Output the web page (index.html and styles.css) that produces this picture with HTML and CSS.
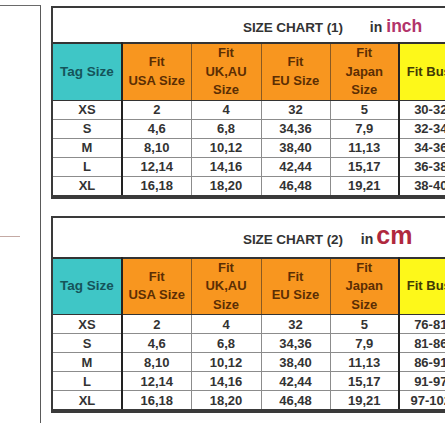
FILE: index.html
```html
<!DOCTYPE html>
<html>
<head>
<meta charset="utf-8">
<link rel="stylesheet" href="styles.css">
</head>
<body>
<div class="side"><div class="mark"></div></div>
<div class="charts">
  <div class="chart">
    <div class="title t1"><span class="name">SIZE CHART (1)</span><span class="in">in</span><span class="unit inch">inch</span></div>
    <table>
      <colgroup><col class="c1"><col class="c2"><col class="c3"><col class="c4"><col class="c5"><col class="c6"></colgroup>
      <tr class="head">
        <th class="tag">Tag Size</th>
        <th class="org">Fit<br>USA Size</th>
        <th class="org">Fit<br>UK,AU<br>Size</th>
        <th class="org">Fit<br>EU Size</th>
        <th class="org dk">Fit<br>Japan<br>Size</th>
        <th class="yel">Fit Bust</th>
      </tr>
      <tr><td>XS</td><td>2</td><td>4</td><td>32</td><td class="dk">5</td><td>30-32</td></tr>
      <tr><td>S</td><td>4,6</td><td>6,8</td><td>34,36</td><td class="dk">7,9</td><td>32-34</td></tr>
      <tr><td>M</td><td>8,10</td><td>10,12</td><td>38,40</td><td class="dk">11,13</td><td>34-36</td></tr>
      <tr><td>L</td><td>12,14</td><td>14,16</td><td>42,44</td><td class="dk">15,17</td><td>36-38</td></tr>
      <tr><td>XL</td><td>16,18</td><td>18,20</td><td>46,48</td><td class="dk">19,21</td><td>38-40</td></tr>
    </table>
  </div>
  <div class="chart">
    <div class="title t2"><span class="name">SIZE CHART (2)</span><span class="in">in</span><span class="unit cm">cm</span></div>
    <table>
      <colgroup><col class="c1"><col class="c2"><col class="c3"><col class="c4"><col class="c5"><col class="c6"></colgroup>
      <tr class="head">
        <th class="tag">Tag Size</th>
        <th class="org">Fit<br>USA Size</th>
        <th class="org">Fit<br>UK,AU<br>Size</th>
        <th class="org">Fit<br>EU Size</th>
        <th class="org dk">Fit<br>Japan<br>Size</th>
        <th class="yel">Fit Bust</th>
      </tr>
      <tr><td>XS</td><td>2</td><td>4</td><td>32</td><td class="dk">5</td><td>76-81</td></tr>
      <tr><td>S</td><td>4,6</td><td>6,8</td><td>34,36</td><td class="dk">7,9</td><td>81-86</td></tr>
      <tr><td>M</td><td>8,10</td><td>10,12</td><td>38,40</td><td class="dk">11,13</td><td>86-91</td></tr>
      <tr><td>L</td><td>12,14</td><td>14,16</td><td>42,44</td><td class="dk">15,17</td><td>91-97</td></tr>
      <tr><td>XL</td><td>16,18</td><td>18,20</td><td>46,48</td><td class="dk">19,21</td><td>97-102</td></tr>
    </table>
  </div>
</div>
</body>
</html>
```
FILE: styles.css
```css
html, body {
  margin: 0;
  padding: 0;
  background: #ffffff;
}
body {
  width: 445px;
  height: 423px;
  overflow: hidden;
  display: flex;
  align-items: flex-start;
  font-family: "Liberation Sans", Arial, sans-serif;
  color: #333;
}
.side {
  width: 41px;
  height: 418px;
  margin-top: 5px;
  box-sizing: border-box;
  border-top: 1px solid #6a6a6a;
  border-right: 1.5px solid #5a5a5a;
  padding-top: 230px;
  flex: none;
}
.mark {
  width: 20px;
  height: 1px;
  background: #c4aaa4;
}
.charts {
  flex: none;
  margin-left: 10px;
  padding-top: 6px;
  display: flex;
  flex-direction: column;
  gap: 17px;
}
.chart {
  width: 430px;
  border: 2px solid #3a3a3a;
  border-right: none;
  background: #fff;
}
.title {
  display: flex;
  align-items: baseline;
  box-sizing: border-box;
  padding-left: 190px;
  font-weight: bold;
  overflow: hidden;
}
.title span { line-height: 1; }
.t1 { height: 34px; padding-top: 10px; }
.t2 { height: 39px; padding-top: 5px; }
.name {
  font-size: 13.5px;
  color: #333;
  letter-spacing: -0.1px;
}
.in {
  font-size: 14px;
  color: #333;
  margin-left: 27px;
}
.t2 .in { margin-left: 18px; }
.inch {
  font-size: 17.5px;
  color: #b2346a;
  margin-left: 4px;
}
.cm {
  font-size: 25px;
  color: #b0283e;
  margin-left: 3px;
}
table {
  border-collapse: collapse;
  table-layout: fixed;
  width: 409px;
}
.c1 { width: 69px; }
.c2 { width: 69px; }
.c3 { width: 70px; }
.c4 { width: 69px; }
.c5 { width: 69px; }
.c6 { width: 63px; }
th {
  height: 55px;
  padding: 0;
  font-size: 13px;
  line-height: 18.5px;
  font-weight: bold;
  border-top: 2px solid #333;
  border-bottom: 1.5px solid #333;
  border-left: 1px solid #8a5a22;
}
th.tag {
  background: #3fc6c6;
  color: #15545a;
  border-left: none;
  border-right: 2px solid #222;
  font-size: 13.5px;
}
th.org {
  background: #f8961f;
  color: #5b2e04;
}
th.dk { border-right: 2px solid #222; }
th.yel {
  background: #fdf81a;
  color: #3f3a05;
  text-align: center;
}
td {
  height: 18px;
  padding: 0;
  text-align: center;
  font-size: 13px;
  font-weight: bold;
  color: #333;
  border: 1px solid #8c8c8c;
}
td:first-child {
  border-left: none;
  border-right: 2px solid #222;
}
td.dk { border-right: 2px solid #222; }
tr:last-child td { border-bottom: 2px solid #3a3a3a; }
```
